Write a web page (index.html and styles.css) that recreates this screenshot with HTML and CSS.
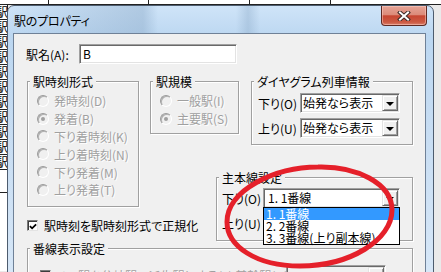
FILE: index.html
```
<!DOCTYPE html>
<html lang="ja">
<head>
<meta charset="utf-8">
<title>駅のプロパティ</title>
<link rel="stylesheet" href="styles.css">
</head>
<body>
<div class="desk">
  <div class="sheet">
    <div class="sheet-top"></div>
    <div class="sheet-col">
      <div class="cell">駅</div><div class="cell">駅</div><div class="cell">駅</div><div class="cell">駅</div>
      <div class="cell">駅</div><div class="cell">駅</div><div class="cell">駅</div><div class="cell">駅</div>
      <div class="cell">駅</div><div class="cell">駅</div><div class="cell">駅</div>
      <div class="cell blank"></div>
    </div>
  </div>

  <div class="win">
    <div class="titlebar">
      <span class="title">駅のプロパティ</span>
      <span class="close"><svg width="14" height="10" viewBox="0 0 14 10"><path d="M3 1.5 L11 8.5 M11 1.5 L3 8.5" stroke="#3b2a28" stroke-width="4" stroke-linecap="square"/><path d="M3 1.5 L11 8.5 M11 1.5 L3 8.5" stroke="#fff" stroke-width="2" stroke-linecap="square"/></svg></span>
    </div>
    <div class="client">
      <div class="r-name">
        <span class="lbl-name">駅名(A):</span>
        <div class="edit">B</div>
      </div>

      <div class="main">
        <div class="col-l">
          <div class="grp g1">
            <div class="gt">駅時刻形式</div>
            <div class="radios">
              <div class="rb"><i class="rd"></i>発時刻(D)</div>
              <div class="rb"><i class="rd on"></i>発着(B)</div>
              <div class="rb"><i class="rd"></i>下り着時刻(K)</div>
              <div class="rb"><i class="rd"></i>上り着時刻(N)</div>
              <div class="rb"><i class="rd"></i>下り発着(M)</div>
              <div class="rb"><i class="rd"></i>上り発着(T)</div>
            </div>
          </div>
          <div class="chk"><i class="cb"><svg width="9" height="9" viewBox="0 0 9 9"><path d="M1 4 L3.5 6.5 L8 2" fill="none" stroke="#000" stroke-width="2"/></svg></i><span class="chk-t">駅時刻を駅時刻形式で正規化</span></div>
        </div>

        <div class="col-r">
          <div class="top-r">
            <div class="grp g2">
              <div class="gt">駅規模</div>
              <div class="radios">
                <div class="rb"><i class="rd"></i>一般駅(I)</div>
                <div class="rb"><i class="rd on"></i>主要駅(S)</div>
              </div>
            </div>
            <div class="grp g3">
              <div class="gt">ダイヤグラム列車情報</div>
              <div class="frow first"><span class="fl">下り(O)</span><div class="combo w100"><span class="ct">始発なら表示</span><span class="db"><i class="arr"></i></span></div></div>
              <div class="frow"><span class="fl">上り(U)</span><div class="combo w100"><span class="ct">始発なら表示</span><span class="db"><i class="arr"></i></span></div></div>
            </div>
          </div>
          <div class="grp g4">
            <div class="gt">主本線設定</div>
            <div class="frow first"><span class="fl fl4">下り(O)</span>
              <div class="combo w137"><span class="ct ct4">1. 1番線</span><span class="db"><i class="arr"></i></span>
                <ul class="list">
                  <li class="sel">1. 1番線</li>
                  <li>2. 2番線</li>
                  <li>3. 3番線(上り副本線)</li>
                </ul>
              </div>
            </div>
            <div class="frow"><span class="fl fl4">上り(U)</span><div class="combo w137"><span class="ct ct4"></span><span class="db"><i class="arr"></i></span></div></div>
          </div>
        </div>
      </div>

      <div class="grp g5">
        <div class="gt">番線表示設定</div>
        <div class="g5row">
          <span class="dchk"><i class="cb dis"></i>この駅を分岐駅の派生駅にする(L)&nbsp;基幹駅(O)</span>
          <div class="combo w100 g5combo"><span class="ct"></span><span class="db"><i class="arr dis"></i></span></div>
        </div>
      </div>
    </div>
  </div>

  <svg class="mark" width="441" height="272" viewBox="0 0 441 272">
    <path d="M318 167 C356 166, 392 183, 392 210 C392 240, 350 266, 300 266 C256 266, 227 246, 227 222 C227 190, 275 167, 318 167 Z" fill="none" stroke="#e5202a" stroke-width="5"/>
  </svg>
</div>
</body>
</html>
```

FILE: styles.css
```
* { box-sizing: border-box; }
html, body { margin: 0; padding: 0; }
body {
  width: 441px; height: 272px; overflow: hidden;
  font-family: "Noto Sans CJK JP", "Noto Sans", sans-serif;
  font-size: 12px;
  font-feature-settings: "palt";
  color: #000;
  background: #ececec;
}
.desk { position: relative; width: 441px; height: 272px; overflow: hidden; }

/* background spreadsheet */
.sheet { position: absolute; left: 0; top: 0; width: 441px; height: 272px; background: #eaeaea; }
.sheet-top {
  height: 5px; background-color: #fff;
  border-bottom: 1px solid #222;
  background-image:
    linear-gradient(#222, #222), linear-gradient(#222, #222),
    linear-gradient(#222, #222), linear-gradient(#222, #222);
  background-size: 1px 5px;
  background-repeat: no-repeat;
  background-position: 48px 0, 148px 0, 249px 0, 330px 0;
}
.sheet-col { width: 8px; overflow: hidden; background: #fff; border-right: 1px solid #222; height: 266px; }
.cell {
  height: 15px; line-height: 14px; border-bottom: 1px solid #222;
  font-size: 12px; text-indent: -4px; white-space: nowrap; overflow: hidden;
}
.cell.blank { height: 23px; }

/* window */
.win {
  position: absolute; left: 7px; top: 5px; width: 427px; height: 290px;
  border: 1px solid #4d5c6e; border-radius: 7px 7px 0 0;
  padding: 0 6px 0 5px;
  background:
    linear-gradient(90deg, rgba(255,255,255,0) 0, rgba(140,170,200,0.45) 135px, rgba(255,255,255,0) 150px, rgba(255,255,255,0) 228px, rgba(140,170,200,0.4) 240px, rgba(255,255,255,0) 252px),
    linear-gradient(#cfe4f8, #bcd7f1 30px, #c9def3 140px, #d8e8f8 280px);
  display: flex; flex-direction: column;
}
.titlebar { height: 27px; display: flex; align-items: flex-start; padding-left: 1px; }
.title { margin-top: 8px; line-height: 13px; letter-spacing: -0.2px; }
.close {
  margin-left: auto; width: 46px; height: 20px; margin-top: 0;
  border: 1px solid #5e2a23; border-top: none; border-radius: 0 0 4px 4px;
  background: linear-gradient(#e6a496 0, #dc8b7a 45%, #c74632 52%, #cc5a43 85%, #d9806c 100%);
  display: flex; align-items: center; justify-content: center;
  box-shadow: inset 0 0 0 1px rgba(255,210,200,0.5);
}
.client {
  flex: 1; width: 413px;
  border: 1px solid #6f8197; border-bottom: none;
  background: #f0f0f0;
  position: relative;
}

/* name row */
.r-name { display: flex; align-items: center; margin-top: 10px; padding-left: 12px; }
.lbl-name { width: 53px; }
.edit {
  width: 158px; height: 20px; background: #fff; padding-left: 3px;
  border: 1px solid; border-color: #a0a0a0 #fff #fff #a0a0a0;
  box-shadow: inset 1px 1px 0 #696969, inset -1px -1px 0 #e3e3e3;
  line-height: 17px;
}

/* layout */
.main { display: flex; margin-top: 17px; }
.col-l { margin-left: 13px; width: 112px; flex: none; display: flex; flex-direction: column; }
.col-r { margin-left: 11px; width: 263px; display: flex; flex-direction: column; }
.top-r { display: flex; gap: 12px; align-items: flex-start; }

/* group box */
.grp {
  border: 1px solid #a0a0a0;
  box-shadow: inset 1px 1px 0 #fff, 1px 1px 0 #fff;
}
.gt {
  display: table; margin: -7px 0 0 2px; padding: 0 3px;
  line-height: 13px; background: #f0f0f0;
}
.g1 { width: 112px; height: 126px; }
.g2 { width: 89px; height: 53px; }
.g3 { width: 162px; height: 64px; padding-left: 6px; }
.g3 .gt, .g4 .gt { margin-left: -4px; }
.g4 .gt { margin-left: -3px; }
.g4 { width: 197px; height: 64px; margin-top: 32px; align-self: flex-end; padding-left: 5px; }
.g5 { width: 386px; height: 40px; margin: 7px 0 0 13px; }

/* radios */
.radios { padding: 4px 0 0 9px; }
.rb {
  display: flex; align-items: center; height: 17.8px; white-space: nowrap;
  color: #a0a0a0; text-shadow: 1px 1px 0 #fff;
}
.rd {
  width: 12px; height: 12px; border-radius: 50%; margin-right: 5px; flex: none;
  border: 1px solid; border-color: #9a9a9a #fff #fff #9a9a9a;
  box-shadow: inset 1px 1px 0 #b0b0b0;
  background: #f0f0f0;
  display: flex; align-items: center; justify-content: center;
}
.rd.on::after { content: ""; width: 4px; height: 4px; border-radius: 50%; background: #a0a0a0; }

/* checkbox */
.chk { display: flex; align-items: center; height: 13px; margin-top: 12px; white-space: nowrap; }
.chk-t { flex: none; }
.cb {
  width: 11px; height: 11px; flex: none; margin-right: 6px;
  background: #fff;
  border: 1px solid; border-color: #7a7a7a #e3e3e3 #e3e3e3 #7a7a7a;
  box-shadow: inset 1px 1px 0 #3c3c3c;
  display: flex; align-items: center; justify-content: center;
}
.cb svg { margin: 1px 0 0 1px; }

/* field rows */
.frow { display: flex; align-items: center; height: 20px; margin-top: 5px; }
.frow.first { margin-top: 5px; }
.g4 .frow.first { margin-top: 4px; }
.fl { width: 42px; white-space: nowrap; }
.fl4 { width: 41px; }

.combo {
  position: relative; height: 20px; display: flex; background: #fff;
  border: 1px solid; border-color: #a0a0a0 #fff #fff #a0a0a0;
  box-shadow: inset 1px 1px 0 #696969, inset -1px -1px 0 #e3e3e3;
  padding: 1px;
}
.w100 { width: 100px; }
.w137 { width: 137px; }
.ct { flex: 1; line-height: 16px; padding-left: 1px; white-space: nowrap; overflow: hidden; }
.ct4 { padding-left: 3px; }
.db {
  width: 16px; height: 16px; flex: none; background: #f0f0f0;
  border: 1px solid; border-color: #e3e3e3 #696969 #696969 #e3e3e3;
  box-shadow: inset 1px 1px 0 #fff, inset -1px -1px 0 #a0a0a0;
  display: flex; align-items: center; justify-content: center;
}
.arr { width: 0; height: 0; border-top: 4px solid #000; border-left: 4px solid transparent; border-right: 4px solid transparent; margin-top: 1px; }
.arr.dis { border-top-color: #a0a0a0; }

.list {
  position: absolute; left: -1px; top: 18px; width: 137px; height: 38px;
  margin: 0; padding: 0; list-style: none; z-index: 2;
  background: #fff; border: 1px solid #000;
}
.list li { height: 12px; line-height: 12px; padding-left: 2px; white-space: nowrap; }
.list li.sel { background: #3399ff; color: #fff; }

/* bottom group */
.g5row { display: flex; align-items: flex-start; margin-top: 10px; padding-left: 12px; }
.dchk { display: flex; align-items: center; color: #a0a0a0; text-shadow: 1px 1px 0 #fff; width: 246px; white-space: nowrap; overflow: hidden; margin-top: 2px; }
.cb.dis { background: #f0f0f0; margin-right: 5px; }
.g5combo { background: #f0f0f0; }

.mark { position: absolute; left: 0; top: 0; z-index: 5; pointer-events: none; }
```
